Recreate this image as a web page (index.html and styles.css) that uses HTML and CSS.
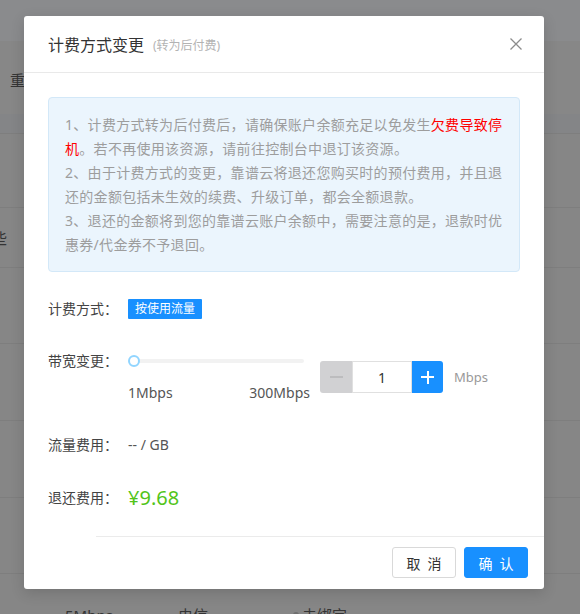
FILE: index.html
```html
<!DOCTYPE html>
<html lang="zh-CN">
<head>
<meta charset="utf-8">
<title>计费方式变更</title>
<link rel="stylesheet" href="styles.css">
</head>
<body>
<div class="page">
  <div class="topbar"></div>
  <div class="toolbar"><span class="bg-text">重</span></div>
  <div class="thead"></div>
  <div class="trow h74"></div>
  <div class="trow h60"><span class="bg-text cut">些</span></div>
  <div class="trow h76"></div>
  <div class="trow h77"></div>
  <div class="trow h77"></div>
  <div class="trow h76"></div>
  <div class="trow last">
    <span class="cell c1">5Mbps</span>
    <span class="cell c2">电信</span>
    <span class="cell c3"><i class="dot"></i>未绑定</span>
    <span class="cell c4">--</span>
  </div>
</div>

<div class="modal">
  <div class="modal-header">
    <span class="modal-title">计费方式变更</span>
    <span class="modal-sub">(转为后付费)</span>
    <svg class="close" width="12" height="12" viewBox="0 0 12 12">
      <path d="M0.5 0.5 L11.5 11.5 M11.5 0.5 L0.5 11.5" stroke="#8c8c8c" stroke-width="1.3" fill="none"/>
    </svg>
  </div>
  <div class="modal-body">
    <div class="alert">
      <p>1、计费方式转为后付费后，请确保账户余额充足以免发生<span class="red">欠费导致停机</span>。若不再使用该资源，请前往控制台中退订该资源。</p>
      <p>2、由于计费方式的变更，靠谱云将退还您购买时的预付费用，并且退还的金额包括未生效的续费、升级订单，都会全额退款。</p>
      <p>3、退还的金额将到您的靠谱云账户余额中，需要注意的是，退款时优惠券/代金券不予退回。</p>
    </div>

    <div class="form-row r1">
      <span class="label">计费方式：</span>
      <span class="tag">按使用流量</span>
    </div>

    <div class="form-row r2">
      <span class="label">带宽变更：</span>
      <div class="slider">
        <div class="slider-rail"><span class="slider-handle"></span></div>
        <div class="slider-marks"><span>1Mbps</span><span>300Mbps</span></div>
      </div>
      <div class="num-input">
        <span class="num-btn minus"><i class="bar-h"></i></span>
        <span class="num-val">1</span>
        <span class="num-btn plus"><i class="bar-h"></i><i class="bar-v"></i></span>
      </div>
      <span class="unit">Mbps</span>
    </div>

    <div class="form-row r3">
      <span class="label">流量费用：</span>
      <span class="value">-- / GB</span>
    </div>

    <div class="form-row r4">
      <span class="label">退还费用：</span>
      <span class="price">¥9.68</span>
    </div>
  </div>
  <div class="modal-footer">
    <button class="btn">取 消</button>
    <button class="btn primary">确 认</button>
  </div>
</div>
</body>
</html>
```

FILE: styles.css
```css
html, body {
  margin: 0;
  padding: 0;
}
body {
  width: 580px;
  height: 614px;
  overflow: hidden;
  position: relative;
  background: #878787;
  font-family: "Noto Sans", "Noto Sans CJK SC", sans-serif;
  font-size: 14px;
  color: #333;
}

/* background page (dimmed) */
.page {
  display: flex;
  flex-direction: column;
  height: 614px;
  overflow: hidden;
}
.topbar {
  height: 41px;
  flex: none;
  background: #8a8b8d;
}
.toolbar {
  height: 73px;
  flex: none;
  display: flex;
  align-items: center;
  padding: 4px 0 0 10px;
  box-sizing: border-box;
  background: #878787;
}
.thead {
  height: 19px;
  flex: none;
  background: #848587;
}
.trow {
  flex: none;
  box-sizing: border-box;
  border-top: 1px solid #7e7e7e;
  background: #868686;
  display: flex;
  align-items: center;
}
.h74 { height: 74px; }
.h60 { height: 60px; }
.h76 { height: 76px; }
.h77 { height: 77px; }
.trow.last {
  height: 41px;
  padding-left: 65px;
  padding-top: 31px;
  align-items: flex-start;
  overflow: hidden;
}
.bg-text {
  color: #343434;
  font-size: 15px;
}
.bg-text.cut {
  margin-left: -8px;
}
.cell {
  color: #343434;
  font-size: 15px;
  line-height: 20px;
  display: flex;
  align-items: center;
}
.c1 { width: 113px; }
.c2 { width: 115px; }
.c3 { width: 126px; }
.dot {
  display: inline-block;
  width: 6px;
  height: 6px;
  border-radius: 50%;
  background: #6e6e6e;
  margin-right: 3px;
}

/* modal */
.modal {
  position: absolute;
  left: 24px;
  top: 16px;
  width: 520px;
  background: #fff;
  border-radius: 3px;
  box-shadow: 0 4px 14px rgba(0, 0, 0, 0.15);
}
.modal-header {
  height: 56px;
  display: flex;
  align-items: center;
  padding: 0 22px 0 24px;
  border-bottom: 1px solid #e9e9e9;
}
.modal-title {
  font-size: 16px;
  color: #333;
}
.modal-sub {
  font-size: 12px;
  color: #b3b3b3;
  margin-left: 9px;
  padding-top: 2px;
}
.close {
  margin-left: auto;
}

.modal-body {
  padding: 24px 24px 24px;
}
.alert {
  background: #ebf5fd;
  border: 1px solid #d3e8f8;
  border-radius: 4px;
  padding: 15px 16px 14px;
  color: #9d9d9d;
  font-size: 14px;
  line-height: 24px;
  letter-spacing: 0.3px;
}
.alert p {
  margin: 0;
}
.red {
  color: #ff0000;
}

.form-row {
  display: flex;
  align-items: center;
}
.label {
  width: 80px;
  flex: none;
  color: #444;
  font-size: 14px;
  line-height: 20px;
}
.r1 { margin-top: 27px; height: 20px; }
.r2 { margin-top: 32px; align-items: flex-start; }
.r3 { margin-top: 32px; height: 20px; }
.r4 { margin-top: 29px; height: 28px; }

.tag {
  background: #1890ff;
  color: #fff;
  font-size: 12px;
  line-height: 20px;
  height: 20px;
  padding: 0 7px;
  border-radius: 1px;
}

.slider {
  width: 182px;
  display: flex;
  flex-direction: column;
}
.slider-rail {
  width: 176px;
  height: 20px;
  position: relative;
  display: flex;
  align-items: center;
}
.slider-rail::before {
  content: "";
  display: block;
  width: 100%;
  height: 4px;
  border-radius: 2px;
  background: #f2f2f2;
}
.slider-handle {
  position: absolute;
  left: 0;
  top: 4px;
  width: 8px;
  height: 8px;
  border: 2px solid #91d5ff;
  border-radius: 50%;
  background: #fff;
}
.slider-marks {
  margin-top: 12px;
  display: flex;
  justify-content: space-between;
  line-height: 20px;
  color: #555;
  font-size: 14px;
}

.num-input {
  margin-left: 10px;
  margin-top: 10px;
  display: flex;
  height: 32px;
  border-radius: 3px;
  overflow: hidden;
}
.num-btn {
  width: 32px;
  height: 32px;
  position: relative;
  display: flex;
  align-items: center;
  justify-content: center;
}
.num-btn.minus {
  background: #d1d1d3;
}
.num-btn.plus {
  width: 31px;
  background: #1890ff;
}
.bar-h {
  display: block;
  width: 13px;
  height: 1.5px;
  background: #bcbcbe;
}
.plus .bar-h {
  background: #fff;
}
.bar-v {
  position: absolute;
  left: 15px;
  top: 9.5px;
  width: 1.5px;
  height: 13px;
  background: #fff;
}
.num-val {
  width: 58px;
  height: 30px;
  border: 1px solid #e0e0e0;
  display: flex;
  align-items: center;
  justify-content: center;
  font-size: 14px;
  color: #333;
}
.unit {
  margin-left: 11px;
  margin-top: 16px;
  line-height: 20px;
  font-size: 13px;
  color: #999;
}

.value {
  color: #555;
  font-size: 14px;
  line-height: 20px;
}
.price {
  color: #52c41a;
  font-size: 20px;
  line-height: 28px;
}

.modal-footer {
  margin-left: 72px;
  border-top: 1px solid #ebebeb;
  padding: 10px 16px 11px;
  display: flex;
  justify-content: flex-end;
  gap: 8px;
}
.btn {
  width: 64px;
  height: 31px;
  border: 1px solid #d9d9d9;
  border-radius: 3px;
  background: #fff;
  color: #333;
  font-family: "Noto Sans CJK SC", sans-serif;
  font-size: 14px;
  word-spacing: 4px;
  padding: 0;
}
.btn.primary {
  background: #1890ff;
  border-color: #1890ff;
  color: #fff;
}
```
